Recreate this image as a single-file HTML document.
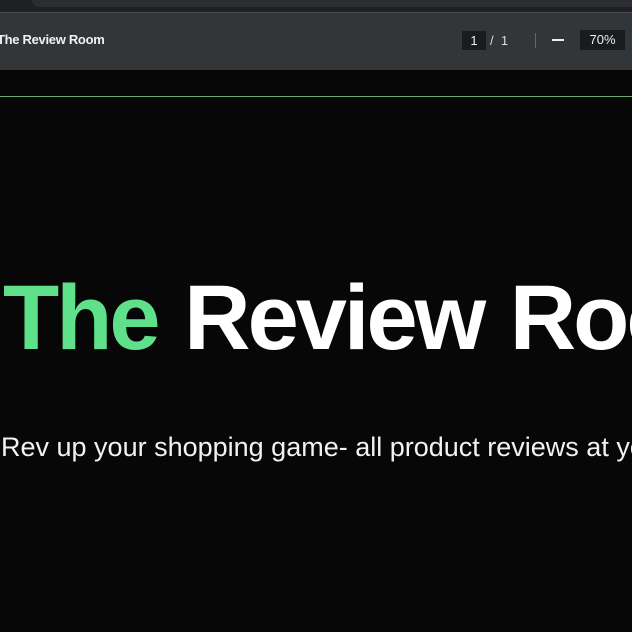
<!DOCTYPE html>
<html><head><style>
html,body{margin:0;padding:0;width:632px;height:632px;overflow:hidden;background:#070707;font-family:"Liberation Sans",sans-serif;}
.top{position:absolute;left:0;top:0;width:632px;height:12px;background:#1f2023;}
.tab{position:absolute;left:32px;top:0;width:600px;height:7px;background:#2c2d30;border-radius:0 0 0 8px;}
.bar{position:absolute;left:0;top:12px;width:632px;height:58px;background:#323639;border-top:1px solid #4a4d50;box-sizing:border-box;}
.title{position:absolute;left:-3px;top:32px;color:#f1f1f1;font-weight:bold;font-size:13px;letter-spacing:-0.3px;}
.pg{position:absolute;left:462px;top:31px;width:24px;height:19px;background:#191b1c;color:#eee;font-size:13px;text-align:center;line-height:19px;}
.sl{position:absolute;left:490px;top:31px;color:#ddd;font-size:13px;line-height:19px;}
.sep{position:absolute;left:535px;top:33px;width:1px;height:15px;background:#666;}
.minus{position:absolute;left:552px;top:39px;width:12px;height:2px;background:#eee;}
.zoom{position:absolute;left:580px;top:30px;width:45px;height:20px;background:#191b1c;color:#eee;font-size:13px;text-align:center;line-height:20px;}
.line{position:absolute;left:0;top:96px;width:632px;height:1px;background:#6aa874;}
h1{position:absolute;left:3px;top:263px;margin:0;font-size:92px;font-weight:bold;color:#fff;white-space:nowrap;letter-spacing:-3px;word-spacing:4px;line-height:110px;}
h1 span{color:#5fe08a;}
p{position:absolute;left:1px;top:430px;margin:0;font-size:27px;color:#f2f2f2;white-space:nowrap;line-height:34px;}
</style></head><body>
<div class="top"><div class="tab"></div></div>
<div class="bar"></div>
<div class="title">The Review Room</div>
<div class="pg">1</div><div class="sl">/&nbsp; 1</div>
<div class="sep"></div><div class="minus"></div>
<div class="zoom">70%</div>
<div class="line"></div>
<h1><span>The</span> Review Room</h1>
<p>Rev up your shopping game- all product reviews at your fingertips</p>
</body></html>
